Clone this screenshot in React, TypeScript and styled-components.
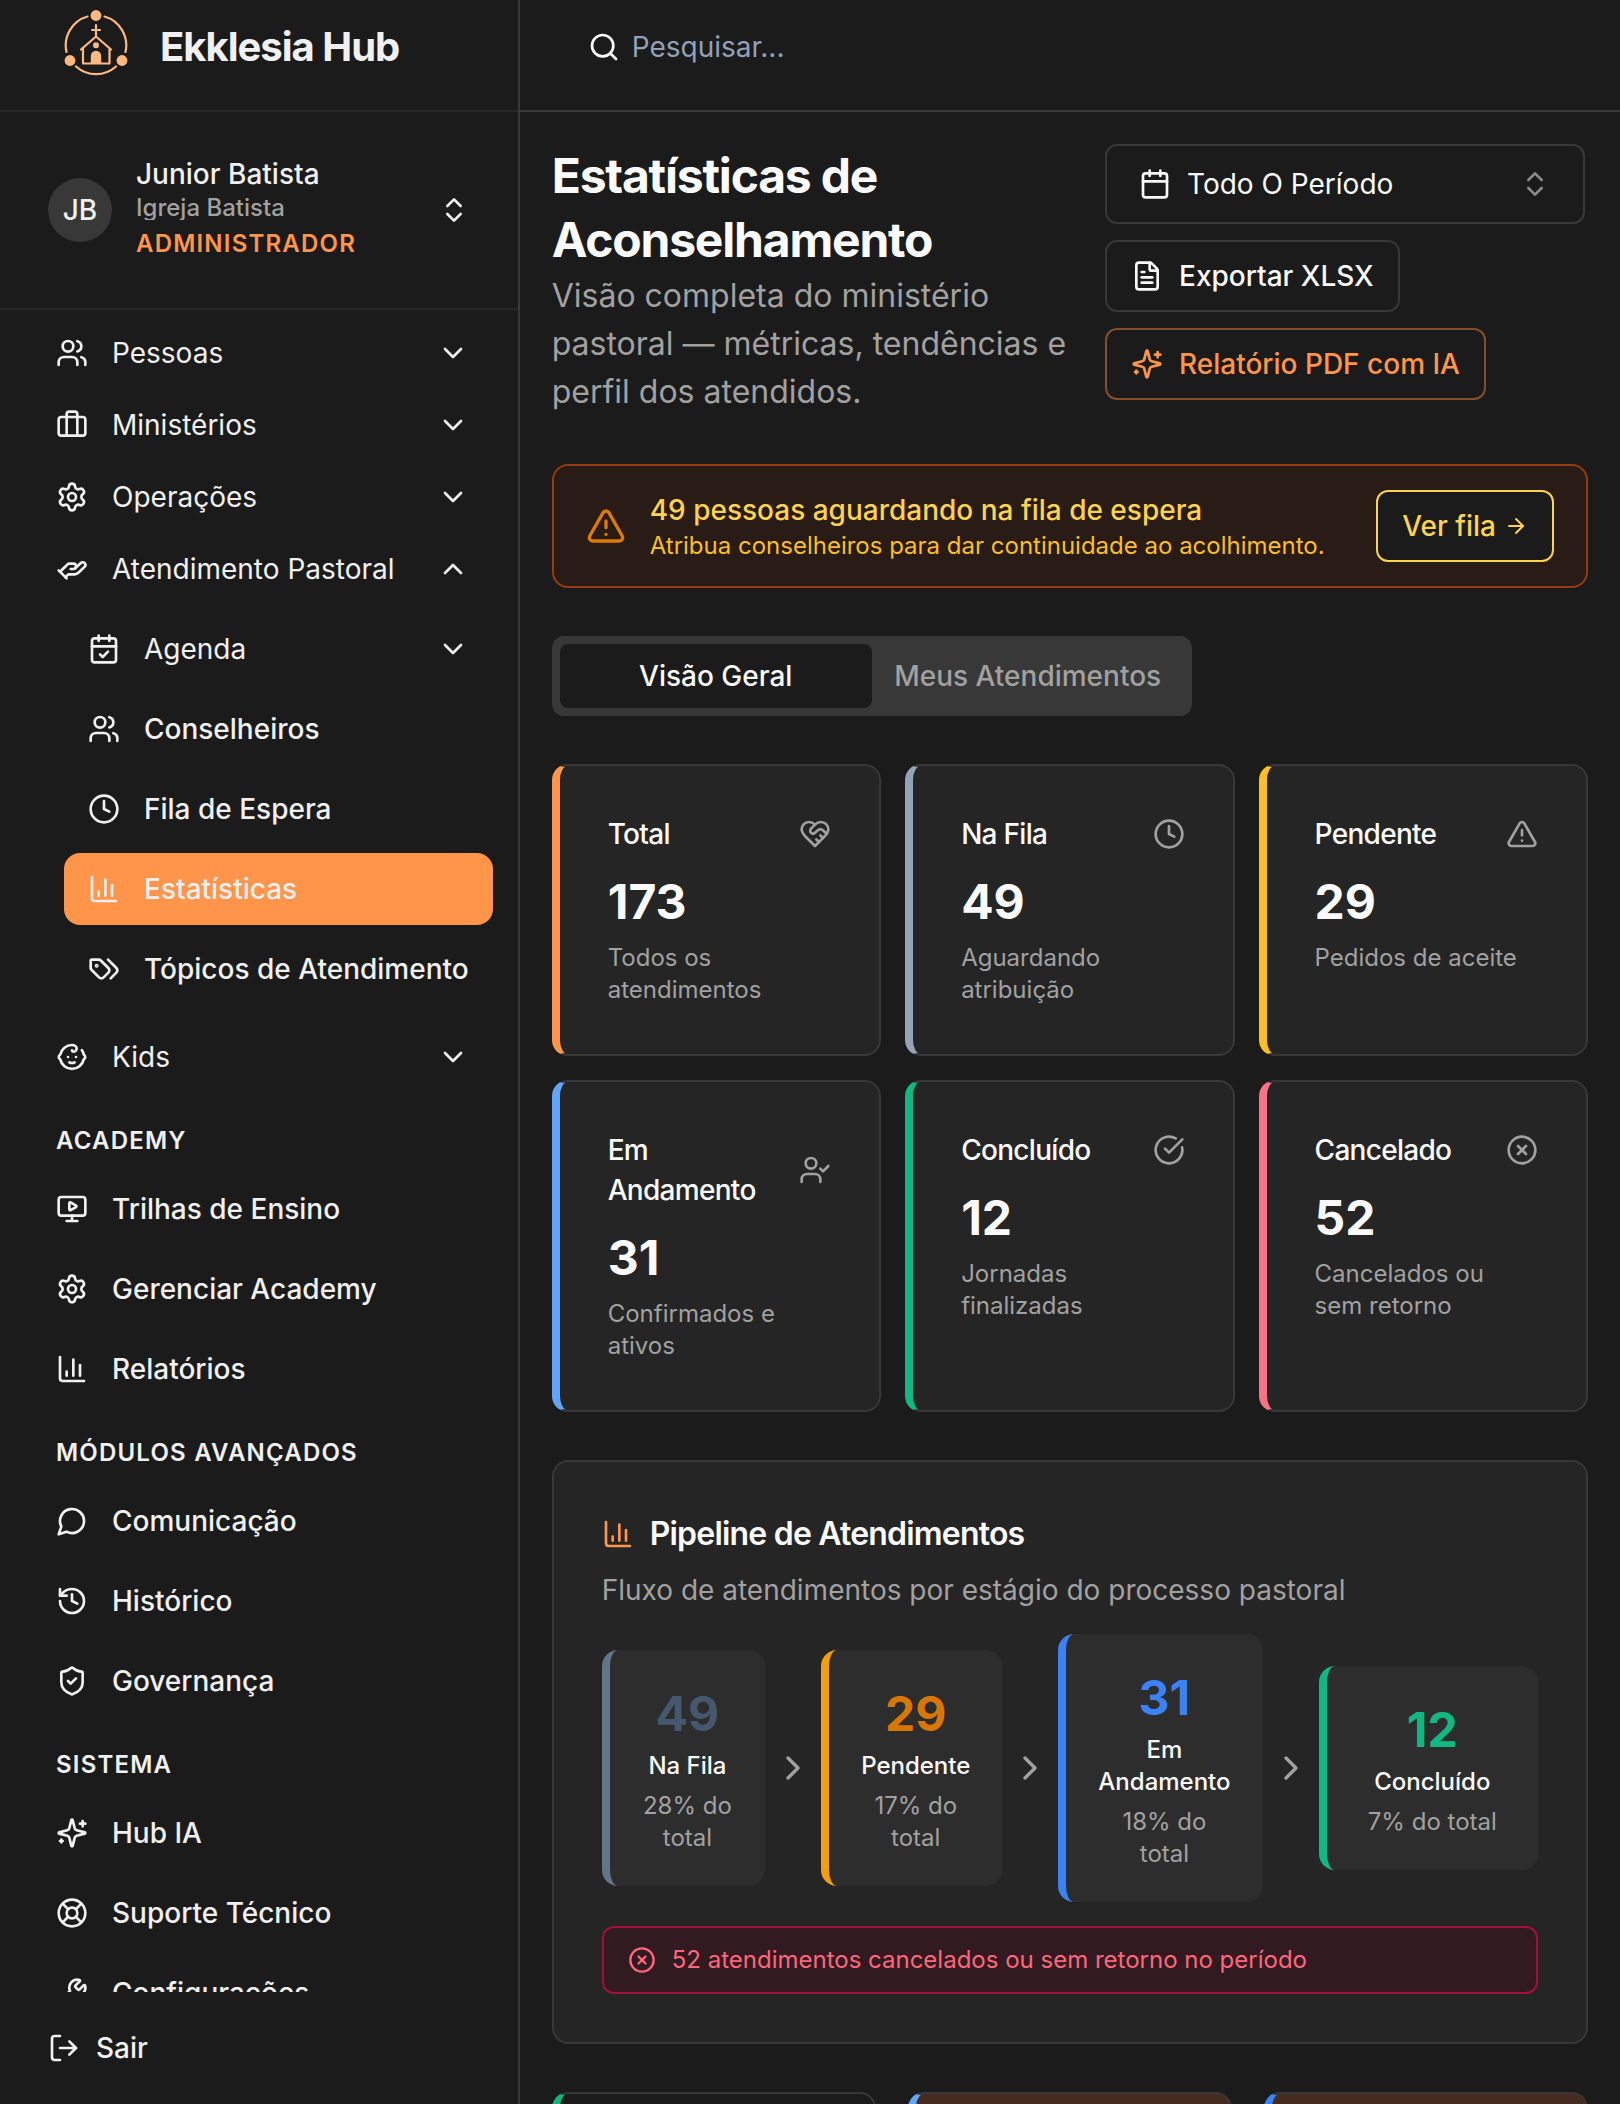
import React from 'react';
import styled, { createGlobalStyle, css } from 'styled-components';
import {
  ArrowRight,
  Baby,
  Briefcase,
  Calendar,
  CalendarCheck,
  ChartColumn,
  ChevronDown,
  ChevronRight,
  ChevronsUpDown,
  ChevronUp,
  CircleCheckBig,
  CircleX,
  Clock,
  FileText,
  HandHelping,
  History,
  LifeBuoy,
  LogOut,
  MonitorPlay,
  Search,
  Settings,
  ShieldCheck,
  TriangleAlert,
  UserCheck,
  Users,
  Wrench,
} from 'lucide-react';

const color = {
  page: '#1b1b1b',
  card: '#252525',
  raised: '#2d2d2d',
  line: '#383838',
  faint: '#272727',
  text: '#fafafa',
  nav: '#f0f0f0',
  muted: '#a1a1a1',
  brand: '#ff954a',
  amber: '#fcd34d',
};

const tracking = {
  heading: '-0.025em',
  caps: '0.05em',
};

const GlobalStyle = createGlobalStyle`
  *, *::before, *::after { box-sizing: border-box; }
  body {
    margin: 0;
    background: ${color.page};
    color: ${color.text};
    font-family: Inter, "Liberation Sans", sans-serif;
    font-size: 28px;
    line-height: 40px;
    font-optical-sizing: none;
    -webkit-font-smoothing: antialiased;
  }
  h1, h2, h3, p, ul { margin: 0; padding: 0; }
  ul { list-style: none; }
  button, input, select { font: inherit; color: inherit; }
  button { cursor: pointer; }
  a { color: inherit; text-decoration: none; }
  svg { flex: none; display: block; }
`;

/* ---------- shell ---------- */

const Shell = styled.div`
  display: flex;
  height: 100vh;
  overflow: hidden;
`;

const Sidebar = styled.aside`
  flex: 0 0 519px;
  display: flex;
  flex-direction: column;
  border-right: 2px solid ${color.line};
`;

const Content = styled.div`
  flex: 1;
  min-width: 0;
  display: flex;
  flex-direction: column;
`;

const barStyles = css`
  flex: none;
  display: flex;
  align-items: center;
  height: 112px;
  padding-bottom: 16px;
`;

const Brand = styled.a`
  ${barStyles}
  gap: 32px;
  padding-left: 64px;
  border-bottom: 2px solid ${color.faint};
  color: ${color.nav};
  font-size: 40px;
  font-weight: 700;
  letter-spacing: ${tracking.heading};
`;

const Topbar = styled.header`
  ${barStyles}
  padding-left: 68px;
  padding-right: 32px;
  border-bottom: 2px solid ${color.line};
`;

const SearchField = styled.label`
  flex: 1;
  display: flex;
  align-items: center;
  gap: 12px;
`;

const SearchInput = styled.input`
  flex: 1;
  min-width: 0;
  padding: 0;
  border: 0;
  outline: 0;
  background: transparent;
  &::placeholder { color: #90a1b9; opacity: 1; }
`;

/* ---------- sidebar ---------- */

const Account = styled.button`
  flex: none;
  display: flex;
  align-items: center;
  gap: 24px;
  padding: 42px 48px;
  border: 0;
  border-bottom: 2px solid ${color.faint};
  background: transparent;
  color: ${color.nav};
  text-align: left;
`;

const Avatar = styled.span`
  flex: none;
  display: grid;
  place-items: center;
  width: 64px;
  height: 64px;
  border-radius: 50%;
  background: ${color.line};
  font-weight: 500;
`;

const AccountText = styled.span`
  flex: 1;
  display: flex;
  flex-direction: column;
  padding-bottom: 6px;
`;

const AccountName = styled.span`
  font-weight: 500;
`;

const AccountChurch = styled.span`
  overflow: hidden;
  margin-top: 2px;
  font-size: 24px;
  line-height: 24px;
  font-weight: 500;
  color: ${color.muted};
`;

const AccountRole = styled.span`
  margin-top: 8px;
  font-size: 24px;
  line-height: 32px;
  font-weight: 600;
  letter-spacing: ${tracking.caps};
  text-transform: uppercase;
  color: ${color.brand};
`;

const Nav = styled.nav`
  flex: 1;
  min-height: 0;
  overflow: hidden;
  padding: 7px 25px 0 32px;
`;

const NavList = styled.ul<{ $spaced?: boolean; $nested?: boolean }>`
  display: flex;
  flex-direction: column;
  gap: ${(p) => (p.$spaced ? 8 : 0)}px;
  ${(p) => p.$nested && 'padding: 8px 0 16px 32px;'}
`;

const navItem = css`
  display: flex;
  align-items: center;
  gap: 24px;
  width: 100%;
  height: 72px;
  padding: 0 24px;
  border: 0;
  border-radius: 16px;
  color: ${color.nav};
  white-space: nowrap;
`;

const NavToggle = styled.button`
  ${navItem}
  background: transparent;
  font-weight: 400;
`;

const NavLink = styled.a<{ $active?: boolean }>`
  ${navItem}
  background: ${(p) => (p.$active ? color.brand : 'transparent')};
  font-weight: 500;
`;

const ToggleLabel = styled.span`
  flex: 1;
  text-align: left;
`;

const NavHeading = styled.h2`
  padding: 32px 24px 16px;
  font-size: 24px;
  line-height: 32px;
  font-weight: 600;
  letter-spacing: ${tracking.caps};
  text-transform: uppercase;
  color: ${color.nav};
`;

const SignOut = styled.button`
  flex: none;
  display: flex;
  align-items: center;
  gap: 16px;
  height: 112px;
  padding: 0 48px;
  border: 0;
  background: transparent;
  color: ${color.nav};
  font-weight: 500;
`;

/* ---------- page ---------- */

const Page = styled.main`
  flex: 1;
  min-height: 0;
  overflow: hidden;
  display: flex;
  flex-direction: column;
  gap: 48px;
  padding: 32px;
  & > * { flex: none; }
`;

const PageHeader = styled.div`
  display: grid;
  grid-template-columns: minmax(0, 1fr) 483px;
  gap: 32px;
`;

const PageTitle = styled.h1`
  font-size: 48px;
  line-height: 64px;
  font-weight: 700;
  letter-spacing: ${tracking.heading};
`;

const PageLead = styled.p`
  font-size: 32px;
  line-height: 48px;
  color: ${color.muted};
`;

const Actions = styled.div`
  display: flex;
  flex-direction: column;
  align-items: flex-start;
  gap: 16px;
`;

const PeriodField = styled.label`
  display: flex;
  align-items: center;
  gap: 16px;
  width: 480px;
  height: 80px;
  padding: 0 32px;
  border: 2px solid ${color.line};
  border-radius: 12px;
`;

const PeriodSelect = styled.select`
  flex: 1;
  min-width: 0;
  padding: 0;
  border: 0;
  outline: 0;
  appearance: none;
  background: transparent;
`;

const Button = styled.button<{ $tone?: 'plain' | 'brand' | 'amber' }>`
  flex: none;
  display: flex;
  align-items: center;
  gap: ${(p) => (p.$tone === 'amber' ? 8 : 16)}px;
  height: 72px;
  padding: 0 24px;
  border: 2px solid
    ${(p) => (p.$tone === 'brand' ? '#854f2b' : p.$tone === 'amber' ? color.amber : color.line)};
  border-radius: 12px;
  background: ${color.page};
  color: ${(p) => (p.$tone === 'brand' ? color.brand : p.$tone === 'amber' ? color.amber : color.text)};
  font-weight: 500;
  white-space: nowrap;
`;

const QueueAlert = styled.div`
  display: flex;
  align-items: center;
  gap: 24px;
  padding: 24px 32px;
  border: 2px solid #973c10;
  border-radius: 16px;
  background: #291b15;
`;

const AlertText = styled.div`
  flex: 1;
`;

const AlertTitle = styled.p`
  font-weight: 500;
  color: ${color.amber};
`;

const AlertNote = styled.p`
  font-size: 24px;
  line-height: 32px;
  color: #fbbf24;
`;

const Tabs = styled.div`
  display: grid;
  grid-template-columns: 1fr 1fr;
  width: 640px;
  height: 80px;
  padding: 8px;
  border-radius: 12px;
  background: ${color.line};
`;

const Tab = styled.button<{ $active?: boolean }>`
  padding: 0;
  border: 0;
  border-radius: 8px;
  background: ${(p) => (p.$active ? color.page : 'transparent')};
  color: ${(p) => (p.$active ? color.text : color.muted)};
  font-weight: 500;
  white-space: nowrap;
`;

const StatGrid = styled.div`
  display: grid;
  grid-template-columns: repeat(3, minmax(0, 1fr));
  gap: 24px;
`;

const StatCard = styled.article<{ $accent: string }>`
  padding: 48px;
  border: 2px solid ${color.line};
  border-left: 8px solid ${(p) => p.$accent};
  border-radius: 16px;
  background: ${color.card};
`;

const StatHead = styled.div`
  display: flex;
  align-items: center;
  justify-content: space-between;
  gap: 32px;
  color: ${color.muted};
`;

const StatTitle = styled.h3`
  font-size: 28px;
  font-weight: 500;
  letter-spacing: ${tracking.heading};
  color: ${color.text};
`;

const StatValue = styled.p`
  margin-top: 16px;
  font-size: 48px;
  line-height: 64px;
  font-weight: 700;
`;

const StatNote = styled.p`
  margin-top: 8px;
  font-size: 24px;
  line-height: 32px;
  color: ${color.muted};
`;

const Panel = styled.section`
  padding: 48px;
  border: 2px solid ${color.line};
  border-radius: 16px;
  background: ${color.card};
`;

const PanelTitle = styled.h2`
  display: flex;
  align-items: center;
  gap: 16px;
  font-size: 32px;
  line-height: 48px;
  font-weight: 600;
  letter-spacing: ${tracking.heading};
`;

const PanelLead = styled.p`
  margin-top: 12px;
  color: ${color.muted};
`;

const Stages = styled.div`
  display: flex;
  align-items: center;
  margin-top: 24px;
`;

const StageStep = styled.div`
  flex: 1;
  display: flex;
  align-items: center;
  color: ${color.muted};
  & > svg { margin: 0 8px; }
`;

const Stage = styled.div<{ $accent: string }>`
  flex: 1;
  padding: 32px;
  border-left: 8px solid ${(p) => p.$accent};
  border-radius: 16px;
  background: ${color.raised};
  text-align: center;
  font-size: 24px;
  line-height: 32px;
`;

const StageValue = styled.p<{ $color: string }>`
  font-size: 48px;
  line-height: 64px;
  font-weight: 700;
  color: ${(p) => p.$color};
`;

const StageName = styled.p`
  margin-top: 4px;
  font-weight: 500;
  color: ${color.text};
`;

const StageShare = styled.p`
  margin-top: 8px;
`;

const CancelNotice = styled.p`
  display: flex;
  align-items: center;
  gap: 16px;
  margin-top: 24px;
  padding: 16px 24px;
  border: 2px solid #a50f3c;
  border-radius: 12px;
  background: #311a20;
  color: #ff667c;
  font-size: 24px;
  line-height: 32px;
`;

const HighlightGrid = styled.div`
  display: grid;
  grid-template-columns: repeat(3, minmax(0, 1fr));
  gap: 32px;
`;

const HighlightCard = styled.article<{ $accent: string; $fill: string }>`
  height: 240px;
  border: 2px solid ${color.line};
  border-left: 8px solid ${(p) => p.$accent};
  border-radius: 16px;
  background: ${(p) => p.$fill};
`;

/* ---------- icons ---------- */

type IconProps = { size?: number };
type IconType = React.ComponentType<IconProps>;

function Glyph({ size = 24, children }: IconProps & { children: React.ReactNode }) {
  return (
    <svg width={size} height={size} viewBox="0 0 24 24" fill="none" stroke="currentColor" strokeWidth="2" strokeLinecap="round" strokeLinejoin="round" aria-hidden="true">
      {children}
    </svg>
  );
}

function SparklesIcon({ size }: IconProps) {
  return (
    <Glyph size={size}>
      <path d="M9.937 15.5A2 2 0 0 0 8.5 14.063l-6.135-1.582a.5.5 0 0 1 0-.962L8.5 9.936A2 2 0 0 0 9.937 8.5l1.582-6.135a.5.5 0 0 1 .963 0L14.063 8.5A2 2 0 0 0 15.5 9.937l6.135 1.581a.5.5 0 0 1 0 .964L15.5 14.063a2 2 0 0 0-1.437 1.437l-1.582 6.135a.5.5 0 0 1-.963 0z" />
      <path d="M20 3v4M22 5h-4M4 17v2M5 18H3" />
    </Glyph>
  );
}

function TagsIcon({ size }: IconProps) {
  return (
    <Glyph size={size}>
      <path d="m15 5 6.300 6.300a2.400 2.400 0 0 1 0 3.400L17 19" />
      <path d="M9.586 5.586A2 2 0 0 0 8.172 5H3a1 1 0 0 0-1 1v5.172a2 2 0 0 0 .586 1.414L8.290 18.290a2.426 2.426 0 0 0 3.420 0l3.580-3.580a2.426 2.426 0 0 0 0-3.420z" />
      <circle cx="6.500" cy="9.500" r=".5" fill="currentColor" />
    </Glyph>
  );
}

function BubbleIcon({ size }: IconProps) {
  return (
    <Glyph size={size}>
      <path d="M7.900 20A9 9 0 1 0 4 16.100L2 22Z" />
    </Glyph>
  );
}

function CareIcon({ size }: IconProps) {
  return (
    <Glyph size={size}>
      <path d="M19 14c1.490-1.460 3-3.210 3-5.500A5.500 5.500 0 0 0 16.500 3c-1.760 0-3 .5-4.500 2-1.500-1.500-2.740-2-4.500-2A5.500 5.500 0 0 0 2 8.500c0 2.300 1.500 4.050 3 5.500l7 7Z" />
      <path d="M12 5 9.040 7.960a2.170 2.170 0 0 0 0 3.080c.82.82 2.130.85 3 .07l2.070-1.900a2.820 2.820 0 0 1 3.790 0l2.960 2.660" />
      <path d="m18 15-2-2M15 18l-2-2" />
    </Glyph>
  );
}

function Logo() {
  return (
    <svg width="64" height="80" viewBox="64 7 64 80" fill="none" stroke="#ffb980" strokeWidth="2.200" strokeLinecap="round" strokeLinejoin="round" aria-hidden="true">
      <path d="M104.500 16.500A30 30 0 0 1 125.500 52M87.500 16.500A30 30 0 0 0 66.500 52M76 66.500a30 30 0 0 0 40 0" />
      <g fill="#ffb980" stroke="none">
        <circle cx="96" cy="15.500" r="5.400" />
        <circle cx="70" cy="60.500" r="5.400" />
        <circle cx="122" cy="60.500" r="5.400" />
        <circle cx="96" cy="45.300" r="3" />
        <path d="M90.800 63v-7a5.200 5.200 0 0 1 10.400 0v7z" />
      </g>
      <path d="M96 25v11M92 30h8M81 49.500l15-13 15 13M83 48.500v15h26.500v-15" />
    </svg>
  );
}

/* ---------- data ---------- */

type NavEntry = { label: string; icon: IconType; toggle?: boolean; open?: boolean; active?: boolean };

const areas: NavEntry[] = [
  { label: 'Pessoas', icon: Users, toggle: true },
  { label: 'Ministérios', icon: Briefcase, toggle: true },
  { label: 'Operações', icon: Settings, toggle: true },
  { label: 'Atendimento Pastoral', icon: HandHelping, toggle: true, open: true },
];

const pastoral: NavEntry[] = [
  { label: 'Agenda', icon: CalendarCheck, toggle: true },
  { label: 'Conselheiros', icon: Users },
  { label: 'Fila de Espera', icon: Clock },
  { label: 'Estatísticas', icon: ChartColumn, active: true },
  { label: 'Tópicos de Atendimento', icon: TagsIcon },
];

const groups: { title: string; items: NavEntry[] }[] = [
  {
    title: 'Academy',
    items: [
      { label: 'Trilhas de Ensino', icon: MonitorPlay },
      { label: 'Gerenciar Academy', icon: Settings },
      { label: 'Relatórios', icon: ChartColumn },
    ],
  },
  {
    title: 'Módulos Avançados',
    items: [
      { label: 'Comunicação', icon: BubbleIcon },
      { label: 'Histórico', icon: History },
      { label: 'Governança', icon: ShieldCheck },
    ],
  },
  {
    title: 'Sistema',
    items: [
      { label: 'Hub IA', icon: SparklesIcon },
      { label: 'Suporte Técnico', icon: LifeBuoy },
      { label: 'Configurações', icon: Wrench },
    ],
  },
];

const stats: { title: string; value: number; note: string; icon: IconType; accent: string }[] = [
  { title: 'Total', value: 173, note: 'Todos os atendimentos', icon: CareIcon, accent: '#ff954a' },
  { title: 'Na Fila', value: 49, note: 'Aguardando atribuição', icon: Clock, accent: '#94a3b8' },
  { title: 'Pendente', value: 29, note: 'Pedidos de aceite', icon: TriangleAlert, accent: '#fbbf24' },
  { title: 'Em Andamento', value: 31, note: 'Confirmados e ativos', icon: UserCheck, accent: '#60a5fa' },
  { title: 'Concluído', value: 12, note: 'Jornadas finalizadas', icon: CircleCheckBig, accent: '#10b981' },
  { title: 'Cancelado', value: 52, note: 'Cancelados ou sem retorno', icon: CircleX, accent: '#fb7185' },
];

const stages = [
  { name: 'Na Fila', value: 49, share: 28, accent: '#64748b', tint: '#45586e' },
  { name: 'Pendente', value: 29, share: 17, accent: '#f59e0b', tint: '#d97706' },
  { name: 'Em Andamento', value: 31, share: 18, accent: '#3b82f6', tint: '#3b82f6' },
  { name: 'Concluído', value: 12, share: 7, accent: '#10b981', tint: '#10b981' },
];

const highlights = [
  { id: 'done', accent: '#10b981', fill: '#1b1b1b' },
  { id: 'active', accent: '#60a5fa', fill: '#462c20' },
  { id: 'people', accent: '#3b82f6', fill: '#462c20' },
];

/* ---------- pieces ---------- */

function NavRow({ entry }: { entry: NavEntry }) {
  const Icon = entry.icon;
  if (entry.toggle) {
    const Chevron = entry.open ? ChevronUp : ChevronDown;
    return (
      <NavToggle type="button" aria-expanded={!!entry.open}>
        <Icon size={32} />
        <ToggleLabel>{entry.label}</ToggleLabel>
        <Chevron size={32} />
      </NavToggle>
    );
  }
  return (
    <NavLink href="#" $active={entry.active} aria-current={entry.active ? 'page' : undefined}>
      <Icon size={32} />
      {entry.label}
    </NavLink>
  );
}

export default function App() {
  return (
    <>
      <GlobalStyle />
      <Shell>
        <Sidebar>
          <Brand href="#">
            <Logo />
            Ekklesia Hub
          </Brand>
          <Account type="button">
            <Avatar>JB</Avatar>
            <AccountText>
              <AccountName>Junior Batista</AccountName>
              <AccountChurch>Igreja Batista</AccountChurch>
              <AccountRole>Administrador</AccountRole>
            </AccountText>
            <ChevronsUpDown size={32} />
          </Account>
          <Nav aria-label="Principal">
            <NavList>
              {areas.map((entry) => (
                <li key={entry.label}>
                  <NavRow entry={entry} />
                  {entry.open && (
                    <NavList $spaced $nested>
                      {pastoral.map((sub) => (
                        <li key={sub.label}><NavRow entry={sub} /></li>
                      ))}
                    </NavList>
                  )}
                </li>
              ))}
              <li><NavRow entry={{ label: 'Kids', icon: Baby, toggle: true }} /></li>
            </NavList>
            {groups.map((group) => (
              <section key={group.title}>
                <NavHeading>{group.title}</NavHeading>
                <NavList $spaced>
                  {group.items.map((entry) => (
                    <li key={entry.label}><NavRow entry={entry} /></li>
                  ))}
                </NavList>
              </section>
            ))}
          </Nav>
          <SignOut type="button">
            <LogOut size={32} />
            Sair
          </SignOut>
        </Sidebar>

        <Content>
          <Topbar>
            <SearchField>
              <Search size={32} />
              <SearchInput type="search" placeholder="Pesquisar..." aria-label="Pesquisar" />
            </SearchField>
          </Topbar>

          <Page>
            <PageHeader>
              <div>
                <PageTitle>Estatísticas de Aconselhamento</PageTitle>
                <PageLead>
                  Visão completa do ministério pastoral — métricas, tendências e perfil dos atendidos.
                </PageLead>
              </div>
              <Actions>
                <PeriodField>
                  <Calendar size={32} />
                  <PeriodSelect aria-label="Período" defaultValue="all">
                    <option value="all">Todo O Período</option>
                  </PeriodSelect>
                  <ChevronsUpDown size={32} color="#8a8a8a" />
                </PeriodField>
                <Button type="button">
                  <FileText size={32} />
                  Exportar XLSX
                </Button>
                <Button type="button" $tone="brand">
                  <SparklesIcon size={32} />
                  Relatório PDF com IA
                </Button>
              </Actions>
            </PageHeader>

            <QueueAlert role="status">
              <TriangleAlert size={40} color="#e17a00" />
              <AlertText>
                <AlertTitle>49 pessoas aguardando na fila de espera</AlertTitle>
                <AlertNote>Atribua conselheiros para dar continuidade ao acolhimento.</AlertNote>
              </AlertText>
              <Button type="button" $tone="amber">
                Ver fila
                <ArrowRight size={24} />
              </Button>
            </QueueAlert>

            <Tabs role="tablist">
              <Tab type="button" role="tab" aria-selected="true" $active>Visão Geral</Tab>
              <Tab type="button" role="tab" aria-selected="false">Meus Atendimentos</Tab>
            </Tabs>

            <StatGrid>
              {stats.map(({ title, value, note, icon: Icon, accent }) => (
                <StatCard key={title} $accent={accent}>
                  <StatHead>
                    <StatTitle>{title}</StatTitle>
                    <Icon size={32} />
                  </StatHead>
                  <StatValue>{value}</StatValue>
                  <StatNote>{note}</StatNote>
                </StatCard>
              ))}
            </StatGrid>

            <Panel>
              <PanelTitle>
                <ChartColumn size={32} color={color.brand} />
                Pipeline de Atendimentos
              </PanelTitle>
              <PanelLead>Fluxo de atendimentos por estágio do processo pastoral</PanelLead>
              <Stages>
                {stages.map((stage, index) => (
                  <StageStep key={stage.name}>
                    <Stage $accent={stage.accent}>
                      <StageValue $color={stage.tint}>{stage.value}</StageValue>
                      <StageName>{stage.name}</StageName>
                      <StageShare>{`${stage.share}% do total`}</StageShare>
                    </Stage>
                    {index < stages.length - 1 && <ChevronRight size={40} />}
                  </StageStep>
                ))}
              </Stages>
              <CancelNotice>
                <CircleX size={28} />
                52 atendimentos cancelados ou sem retorno no período
              </CancelNotice>
            </Panel>

            <HighlightGrid>
              {highlights.map((item) => (
                <HighlightCard key={item.id} $accent={item.accent} $fill={item.fill} />
              ))}
            </HighlightGrid>
          </Page>
        </Content>
      </Shell>
    </>
  );
}
